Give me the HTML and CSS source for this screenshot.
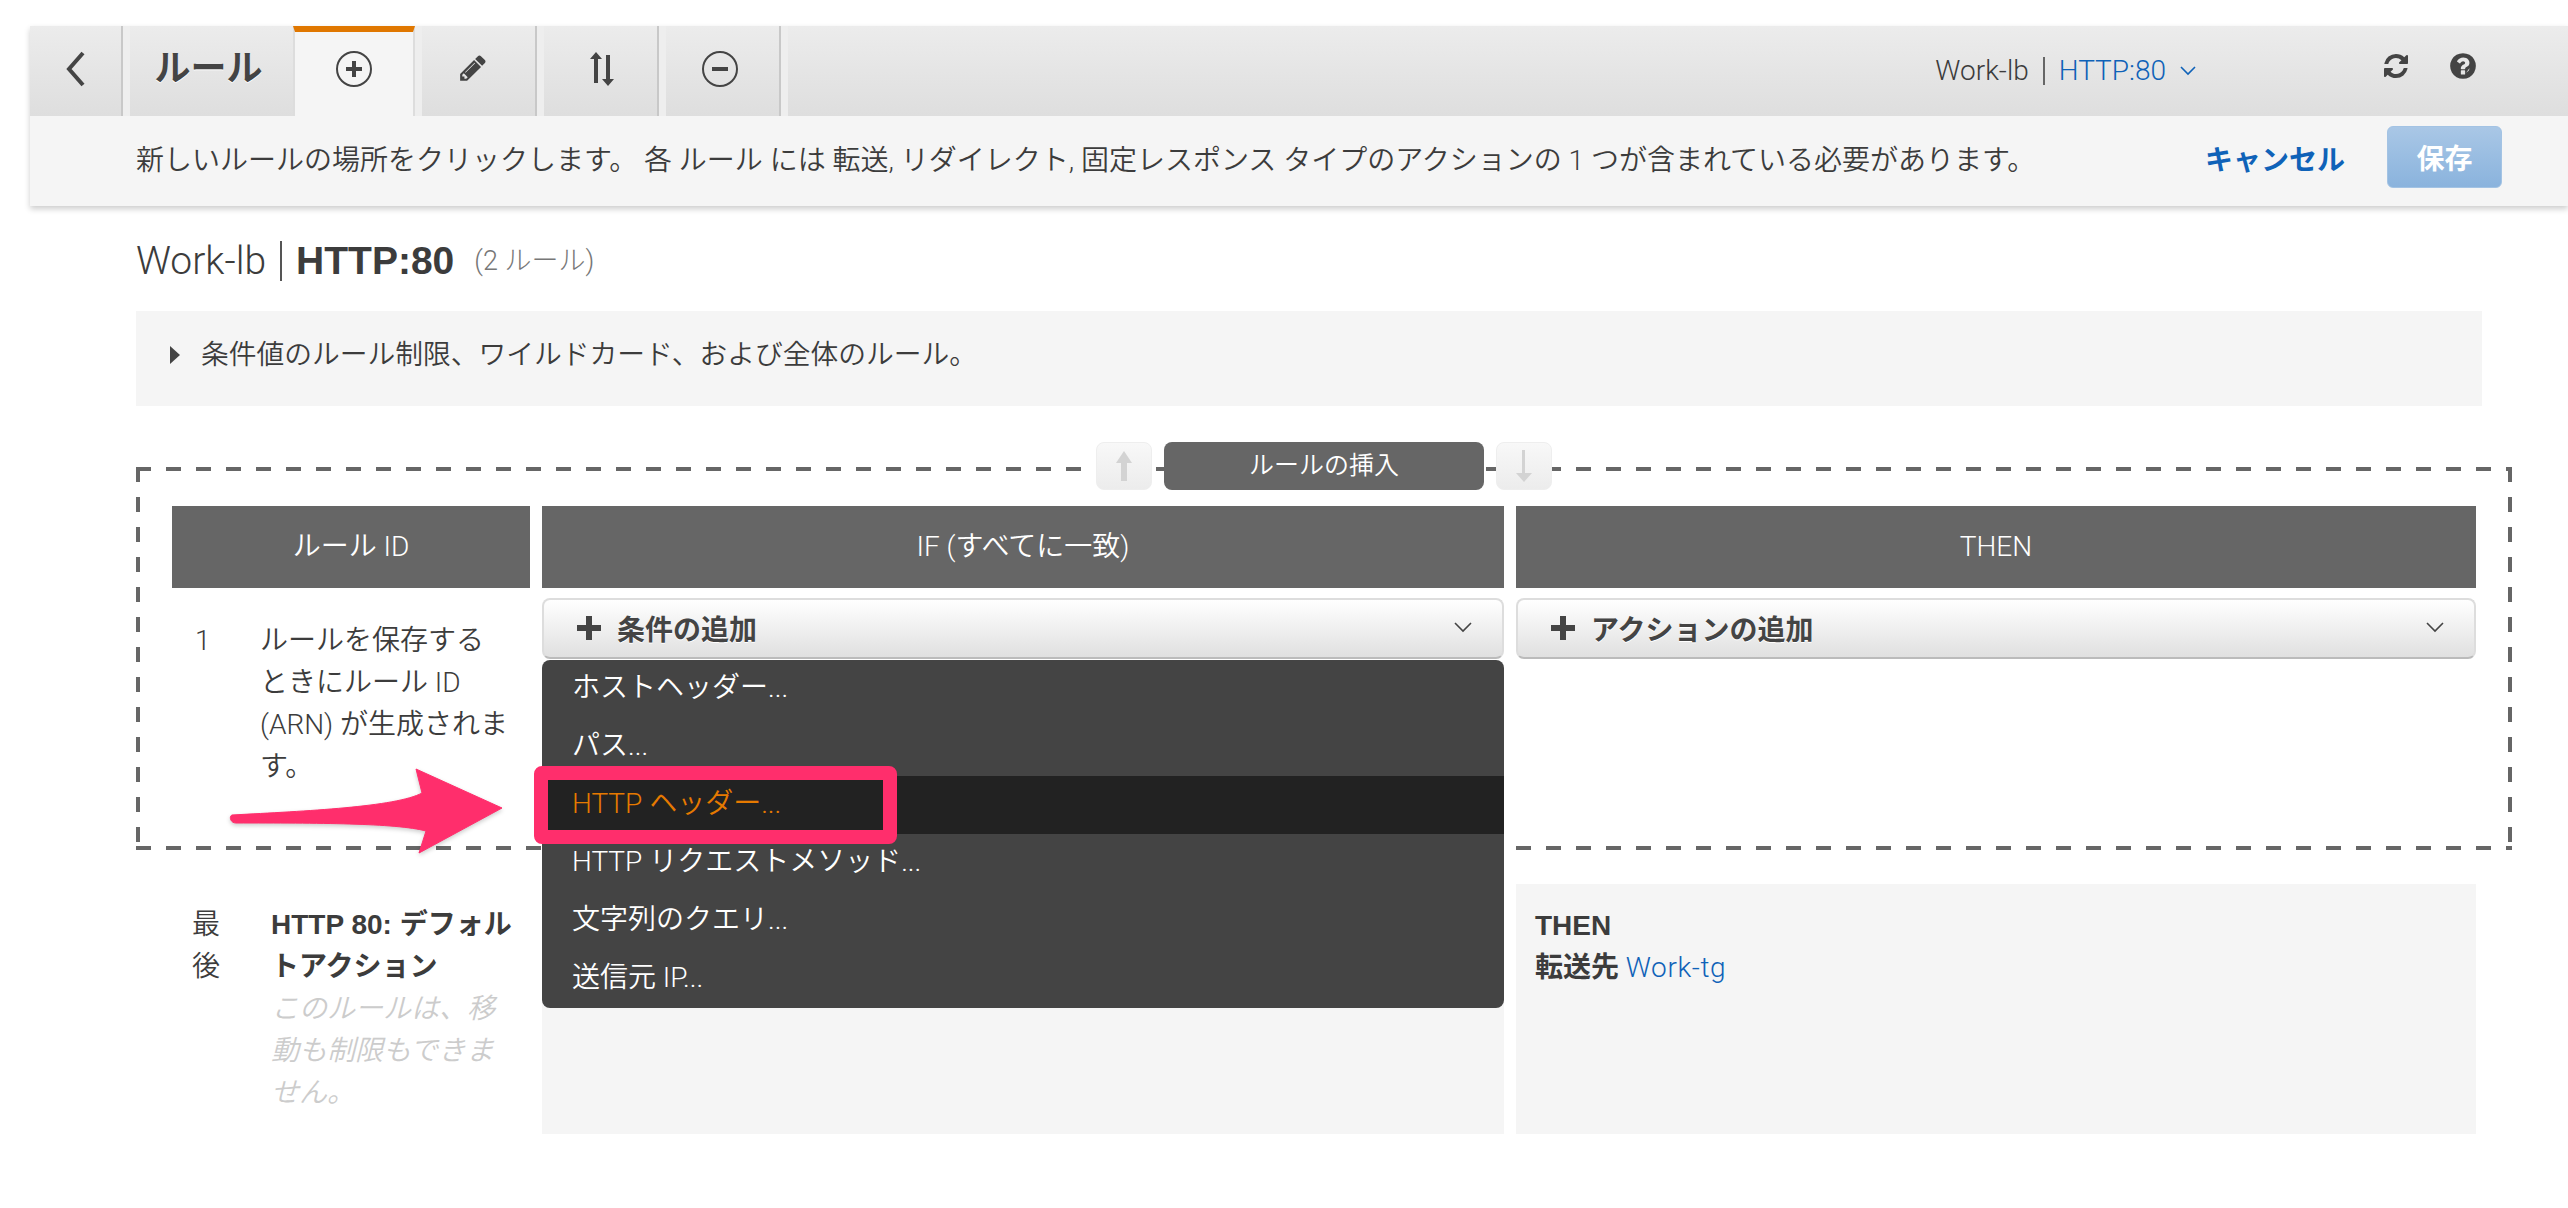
FILE: index.html
```html
<!DOCTYPE html>
<html lang="ja">
<head>
    <meta charset="UTF-8">
    <title>ルール</title>
    <link rel="stylesheet" href="styles.css">
</head>
<body>
    <!-- Barra strumenti -->
    <div class="console">
        <div class="tabs">
            <div class="tab tab-back">
                <svg width="22" height="36" viewBox="0 0 22 36"><path d="M18 2 4 18l14 16" fill="none" stroke="#444" stroke-width="4"/></svg>
            </div>
            <div class="tab tab-title">ルール</div>
            <div class="tab tab-icon active">
                <svg width="38" height="38" viewBox="0 0 38 38"><circle cx="19" cy="19" r="17" fill="none" stroke="#444" stroke-width="2"/><path d="M19 11v16M11 19h16" stroke="#444" stroke-width="4"/></svg>
            </div>
            <div class="tab tab-icon tab-edit">
                <svg width="30" height="30" viewBox="0 0 1792 1792" fill="#444"><path d="M491 1536l91-91-235-235-91 91v107h128v128h107zm523-928q0-22-22-22-10 0-17 7l-542 542q-7 7-7 17 0 22 22 22 10 0 17-7l542-542q7-7 7-17zm-54-192l416 416-832 832h-416v-416zm683 96q0 53-37 90l-166 166-416-416 166-165q36-38 90-38 53 0 91 38l235 234q37 39 37 91z"/></svg>
            </div>
            <div class="tab tab-icon tab-order">
                <svg width="26" height="34" viewBox="0 0 26 34" fill="#444"><path d="M5 7h-4L7 0l6 7H9v24H5zM17 3h4v24h4l-6 7-6-7h4z"/></svg>
            </div>
            <div class="tab tab-icon tab-remove">
                <svg width="38" height="38" viewBox="0 0 38 38"><circle cx="19" cy="19" r="17" fill="none" stroke="#444" stroke-width="2"/><path d="M11 19h16" stroke="#444" stroke-width="4"/></svg>
            </div>
            <div class="tab-end"></div>
            <div class="crumb">
                <span>Work-lb</span>
                <span class="crumb-sep"></span>
                <a class="link">HTTP:80</a>
                <svg width="16" height="10" viewBox="0 0 16 10"><path d="M1 1l7 7 7-7" fill="none" stroke="#0f62b8" stroke-width="1.6"/></svg>
            </div>
            <div class="tool-icons">
                <svg width="28" height="28" viewBox="0 0 1792 1792" fill="#444"><path d="M1639 1056q0 5-1 7-64 268-268 434.5t-478 166.5q-146 0-282.5-55t-243.5-157l-129 129q-19 19-45 19t-45-19-19-45v-448q0-26 19-45t45-19h448q26 0 45 19t19 45-19 45l-137 137q71 66 161 102t187 36q134 0 250-65t186-179q11-17 53-117 8-23 30-23h192q13 0 22.5 9.5t9.5 22.5zm25-800v448q0 26-19 45t-45 19h-448q-26 0-45-19t-19-45 19-45l138-138q-148-137-349-137-134 0-250 65t-186 179q-11 17-53 117-8 23-30 23h-199q-13 0-22.5-9.5t-9.5-22.5v-7q65-268 270-434.5t480-166.5q146 0 284 55.5t245 156.5l130-129q19-19 45-19t45 19 19 45z"/></svg>
                <svg width="30" height="30" viewBox="0 0 1792 1792" fill="#444"><path d="M1024 1376v-192q0-14-9-23t-23-9h-192q-14 0-23 9t-9 23v192q0 14 9 23t23 9h192q14 0 23-9t9-23q0-19 21.5-49.5t54.5-49.5q32-18 49-28.5t46-35 44.5-48 28-60.5 12.5-81zm256-672q0-88-55.5-163t-138.5-116-170-41q-243 0-371 213-15 24 8 42l132 100q7 6 19 6 16 0 25-12 53-68 86-92 34-24 86-24 48 0 85.5 26t37.5 59q0 38-20 61t-68 45q-63 28-115.5 86.5t-52.5 125.5v36q0 14 9 23t23 9h192q14 0 23-9t9-23q0-19 21.5-49.5t54.5-49.5q32-18 49-28.5t46-35 44.5-48 28-60.5 12.5-81zm384 192q0 209-103 385.5t-279.5 279.5-385.5 103-385.5-103-279.5-279.5-103-385.5 103-385.5 279.5-279.5 385.5-103 385.5 103 279.5 279.5 103 385.5z"/></svg>
            </div>
        </div>
        <div class="notice">
            <p>新しいルールの場所をクリックします。 各 ルール には 転送, リダイレクト, 固定レスポンス タイプのアクションの 1 つが含まれている必要があります。</p>
            <a class="cancel">キャンセル</a>
            <button class="save">保存</button>
        </div>
    </div>

    <div class="content">
        <h1><span>Work-lb</span> <span class="title-sep"></span> <b>HTTP:80</b> <small>(2 ルール)</small></h1>

        <div class="info">
            <span class="caret"></span>
            条件値のルール制限、ワイルドカード、および全体のルール。
        </div>

        <!-- Sezione regola -->
        <div class="rule-box">
            <div class="insert">
                <div class="move">
                    <svg width="16" height="30" viewBox="0 0 16 30" fill="#d3d3d3"><path d="M8 0l8 12h-5v18H5V12H0z"/></svg>
                </div>
                <div class="insert-label">ルールの挿入</div>
                <div class="move">
                    <svg width="16" height="32" viewBox="0 0 16 32" fill="#d3d3d3"><path d="M6 0h3v23h7l-8 9-8-9h6z"/></svg>
                </div>
            </div>

            <div class="rule-grid">
                <div class="col-head">ルール ID</div>
                <div class="col-head">IF (すべてに一致)</div>
                <div class="col-head">THEN</div>

                <div class="rule-id">
                    <span class="rule-num">1</span>
                    <span class="rule-text">ルールを保存する<br>ときにルール ID<br>(ARN) が生成されま<br>す。</span>
                </div>
                <div class="add-cell">
                    <button class="add-btn">
                        <svg width="26" height="26" viewBox="0 0 26 26" fill="#444"><path d="M10 1h6v9h9v6h-9v9h-6v-9H1v-6h9z"/></svg>
                        条件の追加
                        <svg class="chev" width="18" height="11" viewBox="0 0 18 11"><path d="M1 1l8 8 8-8" fill="none" stroke="#444" stroke-width="1.6"/></svg>
                    </button>
                    <ul class="menu">
                        <li>ホストヘッダー...</li>
                        <li>パス...</li>
                        <li class="selected">HTTP ヘッダー...</li>
                        <li>HTTP リクエストメソッド...</li>
                        <li>文字列のクエリ...</li>
                        <li>送信元 IP...</li>
                    </ul>
                </div>
                <div class="add-cell">
                    <button class="add-btn">
                        <svg width="26" height="26" viewBox="0 0 26 26" fill="#444"><path d="M10 1h6v9h9v6h-9v9h-6v-9H1v-6h9z"/></svg>
                        アクションの追加
                        <svg class="chev" width="18" height="11" viewBox="0 0 18 11"><path d="M1 1l8 8 8-8" fill="none" stroke="#444" stroke-width="1.6"/></svg>
                    </button>
                </div>
            </div>
        </div>

        <!-- Regola predefinita -->
        <div class="rule-grid last-row">
            <div class="rule-id">
                <span class="last-label">最<br>後</span>
                <div class="last-text">
                    <b>HTTP 80: デフォル<br>トアクション</b>
                    <em>このルールは、移<br>動も制限もできま<br>せん。</em>
                </div>
            </div>
            <div class="last-cell"></div>
            <div class="last-cell then-cell">
                <b>THEN</b><br>
                <b>転送先</b> <a class="link">Work-tg</a>
            </div>
        </div>
    </div>

    <!-- Annotazioni sopra lo screenshot -->
    <div class="mark-box"></div>
    <svg class="mark-arrow" width="290" height="100" viewBox="0 0 290 100">
        <path d="M6 50C80 46 170 42 196 28L190 4 276 43 193 88 200 66C170 58 90 58 10 58 4 58 3 51 6 50z" fill="#ff2e6c" stroke="#ff2e6c" stroke-width="1" stroke-linejoin="round"/>
    </svg>
</body>
</html>
```

FILE: styles.css
```css
/* Stili di base */
* {
    margin: 0;
    padding: 0;
    box-sizing: border-box;
}
body {
    position: relative;
    height: 1208px;
    overflow: hidden;
    background: #fff;
    color: #3c3c3c;
    font-family: Roboto, "Noto Sans CJK JP", sans-serif;
    font-size: 28px;
    font-weight: 350;
    line-height: 42px;
}
b {
    font-family: "Liberation Sans", "Noto Sans CJK JP", sans-serif;
    font-weight: bold;
}
.link {
    color: #0f62b8;
}

/* Barra strumenti */
.console {
    margin: 26px 0 0 30px;
    box-shadow: 0 3px 6px rgba(0, 0, 0, 0.2);
}
.tabs {
    display: flex;
    align-items: stretch;
    height: 90px;
    background: linear-gradient(#ececec, #dedede);
}
.tab {
    display: flex;
    align-items: center;
    justify-content: center;
    margin-right: 7px;
    padding-bottom: 4px;
    border-right: 2px solid #c8c8c8;
    box-shadow: 7px 0 0 #eee;
}
.tab-back {
    width: 93px;
}
.tab-title {
    width: 163px;
    margin-right: 0;
    padding-right: 6px;
    box-shadow: none;
    border-right: none;
    color: #444;
    font-family: "Liberation Sans", "Noto Sans CJK JP", sans-serif;
    font-size: 36px;
    font-weight: bold;
    text-shadow: 0 1px 0 #fff;
}
.tab-icon {
    width: 115px;
}
.tab-icon.active {
    width: 122px;
    margin-right: 7px;
    padding-bottom: 10px;
    background: #f5f5f5;
    border-top: 6px solid #e07700;
    border-left: 2px solid #ddd;
    border-right: 2px solid #ddd;
    box-shadow: 7px 0 0 #eee;
}
.tab-edit {
    padding: 0 12px 6px 0;
}
.tab-order {
    padding-left: 3px;
}
.tab-remove {
    padding-right: 6px;
}
.tab-end {
    flex: 1;
}
.crumb {
    display: flex;
    align-items: center;
    gap: 14px;
    font-size: 28px;
}
.crumb-sep {
    width: 2px;
    height: 28px;
    background: #666;
}
.tool-icons {
    display: flex;
    align-items: center;
    gap: 38px;
    margin: 0 90px 10px 186px;
}

/* Avviso con pulsanti */
.notice {
    display: flex;
    align-items: center;
    height: 90px;
    padding-left: 106px;
    background: #f5f5f5;
}
.notice p {
    flex: 1;
}
.cancel {
    margin-right: 42px;
    color: #0f62b8;
    font-family: "Liberation Sans", "Noto Sans CJK JP", sans-serif;
    font-weight: bold;
}
.save {
    width: 115px;
    height: 62px;
    margin: 0 66px 8px 0;
    border: 1px solid #a3c3e4;
    border-radius: 6px;
    background: linear-gradient(#a9c7e6, #8ab3dd);
    color: #fff;
    font: bold 28px "Liberation Sans", "Noto Sans CJK JP", sans-serif;
}

/* Contenuto */
.content {
    padding: 33px 56px 0 136px;
}
h1 {
    display: flex;
    align-items: center;
    gap: 14px;
    height: 44px;
    font-size: 39px;
    font-weight: 300;
}
.title-sep {
    width: 2px;
    height: 40px;
    background: #555;
}
h1 b {
    font-size: 39px;
}
h1 small {
    margin-left: 6px;
    color: #777;
    font-size: 27px;
    font-weight: 300;
}
.info {
    display: flex;
    align-items: center;
    height: 95px;
    margin: 28px 30px 61px 0;
    padding: 0 0 8px 34px;
    background: #f5f5f5;
    font-size: 27.75px;
}
.caret {
    width: 0;
    height: 0;
    margin-right: 21px;
    border-top: 9px solid transparent;
    border-bottom: 9px solid transparent;
    border-left: 10px solid #444;
}

/* Riquadro tratteggiato */
.rule-box {
    position: relative;
    height: 383px;
    padding: 39px 36px 0;
    background:
        repeating-linear-gradient(90deg, #666 0 15px, transparent 15px 30px) top left / 100% 4px no-repeat,
        repeating-linear-gradient(90deg, #666 0 15px, transparent 15px 30px) bottom left / 100% 4px no-repeat,
        repeating-linear-gradient(#666 0 15px, transparent 15px 30px) top left / 4px 100% no-repeat,
        repeating-linear-gradient(#666 0 15px, transparent 15px 30px) top right / 4px 100% no-repeat;
}
.insert {
    position: absolute;
    top: -25px;
    left: 0;
    right: 0;
    display: flex;
    justify-content: center;
    gap: 12px;
}
.insert-label {
    width: 320px;
    height: 48px;
    border-radius: 8px;
    background: #666;
    color: #fff;
    font-size: 25px;
    line-height: 48px;
    text-align: center;
}
.move {
    display: flex;
    align-items: center;
    justify-content: center;
    width: 56px;
    height: 48px;
    border: 1px solid #eee;
    border-radius: 8px;
    background: linear-gradient(#f8f8f8, #ececec);
}

.rule-grid {
    display: grid;
    grid-template-columns: 358px 962px 960px;
    column-gap: 12px;
}
.col-head {
    height: 82px;
    background: #666;
    color: #fff;
    line-height: 82px;
    text-align: center;
}
.rule-id {
    display: flex;
    padding: 32px 0 0 23px;
}
.rule-num {
    width: 65px;
}
.add-cell {
    position: relative;
    padding-top: 10px;
}
.add-btn {
    display: flex;
    align-items: center;
    gap: 15px;
    width: 100%;
    height: 61px;
    padding: 0 30px 2px 32px;
    border: 2px solid #ddd;
    border-bottom-color: #bbb;
    border-radius: 8px;
    background: linear-gradient(#fff, #e0e0e0);
    color: #444;
    font: bold 28px "Liberation Sans", "Noto Sans CJK JP", sans-serif;
    text-shadow: 0 1px 0 #fff;
}
.chev {
    margin-left: auto;
}
.menu {
    position: absolute;
    top: 72px;
    left: 0;
    right: 0;
    z-index: 2;
    overflow: hidden;
    border-radius: 8px;
    background: #444;
    color: #fff;
    list-style: none;
}
.menu li {
    height: 58px;
    padding-left: 30px;
    line-height: 56px;
    white-space: nowrap;
}
.menu .selected {
    background: #222;
    color: #e67a00;
}

/* Regola predefinita */
.last-row {
    height: 250px;
    margin-top: 34px;
    padding: 0 36px;
}
.last-row .rule-id {
    padding: 20px 0 0 20px;
}
.last-label {
    width: 79px;
}
.last-text em {
    display: block;
    color: #ccc;
}
.last-cell {
    background: #f5f5f5;
}
.then-cell {
    padding: 21px 19px 0;
}
.then-cell .link {
    letter-spacing: 0.6px;
}

/* Annotazioni */
.mark-box {
    position: absolute;
    top: 766px;
    left: 534px;
    z-index: 3;
    width: 363px;
    height: 78px;
    border: 14px solid #ff2e6c;
    border-radius: 8px;
}
.mark-arrow {
    position: absolute;
    top: 765px;
    left: 226px;
    z-index: 3;
    filter: drop-shadow(0 2px 2px rgba(0, 0, 0, 0.2));
}
```
